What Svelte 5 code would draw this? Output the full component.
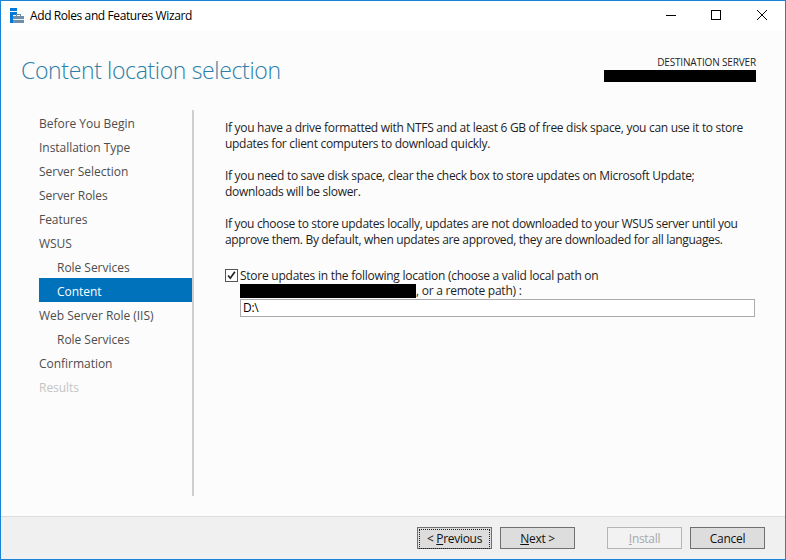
<script>
	const steps = [
		{ name: 'Before You Begin' },
		{ name: 'Installation Type' },
		{ name: 'Server Selection' },
		{ name: 'Server Roles' },
		{ name: 'Features' },
		{ name: 'WSUS' },
		{ name: 'Role Services', sub: true },
		{ name: 'Content', sub: true, active: true },
		{ name: 'Web Server Role (IIS)' },
		{ name: 'Role Services', sub: true },
		{ name: 'Confirmation' },
		{ name: 'Results', disabled: true }
	];
</script>

<div class="window">
	<div class="titlebar">
		<svg class="app-icon" width="16" height="16" viewBox="0 0 16 16">
			<rect x="0" y="0" width="7" height="3" fill="#0078d7" />
			<rect x="0" y="4" width="7" height="3" fill="#0078d7" />
			<rect x="0" y="7" width="3" height="8" fill="#0078d7" />
			<rect x="3" y="8" width="11" height="7" fill="#6f8fa8" />
			<rect x="3" y="11" width="11" height="1" fill="#e8eef3" />
			<rect x="6.5" y="6.5" width="4" height="2" fill="none" stroke="#6f8fa8" />
		</svg>
		<span class="title">Add Roles and Features Wizard</span>
		<div class="controls">
			<svg width="45" height="30" viewBox="0 0 45 30"><path d="M16 14.5h10" stroke="#000" fill="none" /></svg>
			<svg width="45" height="30" viewBox="0 0 45 30"><rect x="16.5" y="9.5" width="9" height="9" stroke="#000" fill="none" /></svg>
			<svg width="45" height="30" viewBox="0 0 45 30"><path d="M17 9l10 10M27 9l-10 10" stroke="#000" fill="none" /></svg>
		</div>
	</div>

	<div class="main">
		<header class="head">
			<h1>Content location selection</h1>
			<div class="server">
				<span>DESTINATION SERVER</span>
				<div class="redact server-name"></div>
			</div>
		</header>

		<div class="body">
			<nav class="steps">
				{#each steps as step}
					<div class="step" class:sub={step.sub} class:active={step.active} class:disabled={step.disabled}>{step.name}</div>
				{/each}
			</nav>

			<div class="content">
				<p>If you have a drive formatted with NTFS and at least 6 GB of free disk space, you can use it to store<br />updates for client computers to download quickly.</p>
				<p>If you need to save disk space, clear the check box to store updates on Microsoft Update;<br />downloads will be slower.</p>
				<p class="tight">If you choose to store updates locally, updates are not downloaded to your WSUS server until you<br />approve them. By default, when updates are approved, they are downloaded for all languages.</p>

				<div class="store">
					<div class="check-row">
						<span class="checkbox">
							<svg width="13" height="13" viewBox="0 0 13 13"><path d="M2.5 6.5l2.6 3.2L10.5 2" stroke="#222" stroke-width="2" fill="none" /></svg>
						</span>
						<span>Store updates in the following location (choose a valid local path on</span>
					</div>
					<div class="path-row">
						<span class="redact path-name"></span>
						<span>, or a remote path) :</span>
					</div>
					<div class="path-input">D:\</div>
				</div>
			</div>
		</div>
	</div>

	<footer class="footer">
		<button class="focused"><span class="dotted">&lt; <u>P</u>revious</span></button>
		<button><u>N</u>ext &gt;</button>
		<button class="install" disabled><u>I</u>nstall</button>
		<button>Cancel</button>
	</footer>
</div>

<style>
	:global(body) {
		margin: 0;
	}

	.window {
		box-sizing: border-box;
		width: 786px;
		height: 560px;
		display: flex;
		flex-direction: column;
		border: 1px solid #1883d7;
		background: #fcfcfc;
		font-family: 'Open Sans', 'Noto Sans', sans-serif;
		font-size: 12px;
		letter-spacing: -0.3px;
		color: #1e1e1e;
	}

	.titlebar {
		height: 30px;
		flex: none;
		display: flex;
		align-items: center;
		background: #fff;
	}

	.app-icon {
		margin-left: 9px;
		margin-right: 4px;
	}

	.title {
		color: #000;
		letter-spacing: -0.4px;
		line-height: 30px;
		height: 30px;
	}

	.controls {
		margin-left: auto;
		display: flex;
	}

	.main {
		flex: 1;
		display: flex;
		flex-direction: column;
		min-height: 0;
	}

	.head {
		height: 79px;
		flex: none;
		display: flex;
		justify-content: space-between;
		padding: 0 29px 0 20px;
	}

	h1 {
		margin: 22px 0 0;
		font-size: 23px;
		font-weight: 300;
		line-height: 34px;
		letter-spacing: -0.35px;
		color: #2b7fa8;
	}

	.server {
		margin-top: 24px;
		display: flex;
		flex-direction: column;
		align-items: flex-end;
		font-size: 10px;
		line-height: 14px;
		letter-spacing: -0.15px;
	}

	.redact {
		background: #000;
	}

	.server-name {
		width: 152px;
		height: 12px;
		margin-top: 1px;
	}

	.body {
		flex: 1;
		display: flex;
		min-height: 0;
		padding-bottom: 20px;
	}

	.steps {
		box-sizing: border-box;
		width: 193px;
		padding-left: 38px;
		border-right: 2px solid #cfcfcf;
		flex: none;
	}

	.step {
		height: 24px;
		line-height: 28px;
		color: #4d4d4d;
		letter-spacing: -0.03px;
	}

	.step.sub {
		padding-left: 18px;
	}

	.step.active {
		background: #0072bc;
		color: #fff;
	}

	.step.disabled {
		color: #c4c4c4;
	}

	.content {
		flex: 1;
		padding: 10px 30px 0 31px;
		min-width: 0;
	}

	p {
		margin: 0 0 16px;
		line-height: 16px;
	}

	.tight {
		letter-spacing: -0.33px;
	}

	.store {
		margin-top: 19px;
		letter-spacing: -0.25px;
	}

	.check-row {
		display: flex;
		align-items: center;
		height: 16px;
	}

	.checkbox {
		box-sizing: border-box;
		width: 13px;
		height: 13px;
		border: 1px solid #555;
		background: #fff;
		display: flex;
		align-items: center;
		justify-content: center;
		margin-right: 2px;
		flex: none;
	}

	.path-row {
		display: flex;
		height: 16px;
		line-height: 16px;
		padding-left: 15px;
	}

	.path-name {
		width: 176px;
		height: 14px;
		margin-top: 1px;
	}

	.path-input {
		box-sizing: border-box;
		height: 18px;
		margin-left: 15px;
		border: 1px solid #ababab;
		background: #fff;
		padding-left: 2px;
		line-height: 16px;
		color: #000;
	}

	.footer {
		flex: none;
		box-sizing: border-box;
		height: 43px;
		display: flex;
		align-items: flex-start;
		padding: 10px 20px 0 416px;
		background: #f0f0f0;
		border-top: 1px solid #dcdcdc;
		gap: 8px;
	}

	button {
		box-sizing: border-box;
		width: 75px;
		height: 22px;
		padding: 0;
		border: 1px solid #707070;
		background: #dddddd;
		font: inherit;
		letter-spacing: inherit;
		color: #111;
	}

	.install {
		margin-left: 24px;
		background: #f2f2f2;
		border-color: #b5b5b5;
		color: #a8a8a8;
	}

	.focused {
		padding: 1px;
	}

	.dotted {
		display: block;
		height: 18px;
		line-height: 17px;
		border: 1px dotted #222;
	}
</style>
